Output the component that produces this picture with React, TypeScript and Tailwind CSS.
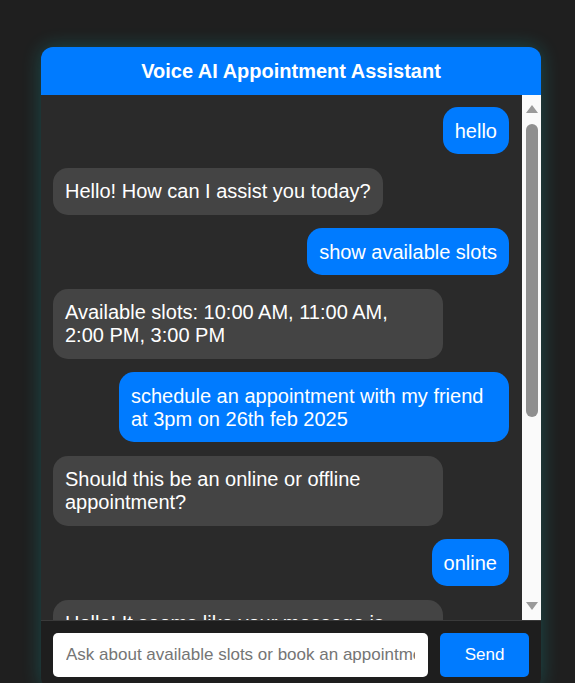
import React from 'react';

type Msg = { from: 'user' | 'bot'; text: string };

const messages: Msg[] = [
    { from: 'user', text: 'hello' },
    { from: 'bot', text: 'Hello! How can I assist you today?' },
    { from: 'user', text: 'show available slots' },
    { from: 'bot', text: 'Available slots: 10:00 AM, 11:00 AM, 2:00 PM, 3:00 PM' },
    { from: 'user', text: 'schedule an appointment with my friend at 3pm on 26th feb 2025' },
    { from: 'bot', text: 'Should this be an online or offline appointment?' },
    { from: 'user', text: 'online' },
    { from: 'bot', text: 'Hello! It seems like your message is incomplete. Could you please provide more details?' },
];

function Arrow({ down }: { down?: boolean }) {
    return (
        <svg width="12" height="8" viewBox="0 0 12 8" className="mx-auto block">
            <polygon points={down ? '0,0 12,0 6,8' : '6,0 12,8 0,8'} fill="#9a9a9a" />
        </svg>
    );
}

export default function App() {
    return (
        <div className="min-h-screen bg-[#1f1f1f] pt-[47px] pb-10 pl-[41px] font-['Liberation_Sans',Arial,sans-serif]">
            <div className="w-[500px] rounded-xl bg-[#2a2a2a] shadow-[0_0_20px_rgba(0,255,255,0.2)]">
                {/* Header */}
                <div className="flex h-12 items-center justify-center rounded-t-xl bg-[#007bff]">
                    <h1 className="text-[20px] font-bold text-white">Voice AI Appointment Assistant</h1>
                </div>

                {/* Messages + scrollbar */}
                <div className="flex h-[525px]">
                    <div className="flex flex-1 flex-col gap-[13.5px] overflow-hidden pt-3 pb-3 pl-3 pr-[13px]">
                        {messages.map((m, i) => (
                            <div
                                key={i}
                                className={
                                    m.from === 'user'
                                        ? 'max-w-[390px] shrink-0 self-end rounded-[15px] bg-[#007bff] px-3 pt-[12.5px] pb-[11.5px] text-[20px] leading-[23px] text-white'
                                        : 'max-w-[390px] shrink-0 self-start rounded-[15px] bg-[#444444] px-3 pt-[12.5px] pb-[11.5px] text-[20px] leading-[23px] text-white'
                                }
                            >
                                {m.text}
                            </div>
                        ))}
                    </div>
                    <div className="flex w-[19px] flex-col bg-[#fafafa] pt-[10px] pb-[10px]">
                        <Arrow />
                        <div className="mx-auto mt-[11px] h-[293px] w-3 rounded-full bg-[#8f8f8f]" />
                        <div className="flex-1" />
                        <Arrow down />
                    </div>
                </div>

                {/* Input */}
                <div className="flex gap-3 rounded-b-xl border-t border-[#3a3a3a] bg-[#1e1e1e] p-3">
                    <input
                        className="h-11 min-w-0 flex-1 rounded-[5px] bg-white px-[13px] text-[17px] text-gray-800 outline-none placeholder:text-[#757575]"
                        placeholder="Ask about available slots or book an appointment"
                    />
                    <button className="h-11 w-[89px] rounded-[5px] bg-[#007bff] text-[17px] text-white">Send</button>
                </div>
            </div>
        </div>
    );
}
